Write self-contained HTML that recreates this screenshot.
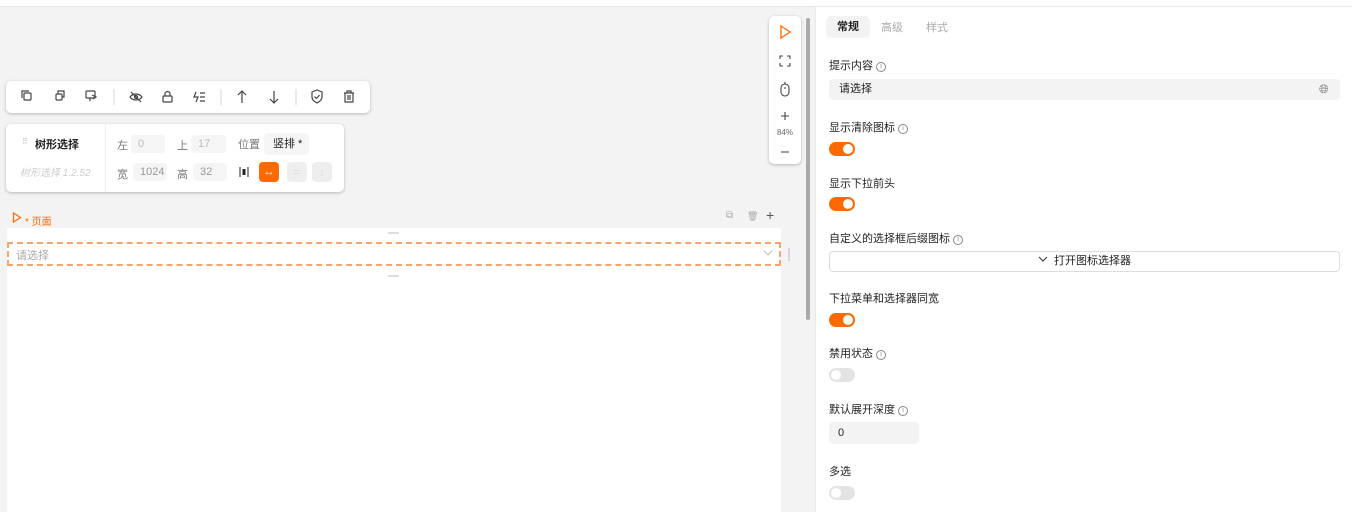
<!DOCTYPE html><html><head><meta charset="utf-8"><style>
*{box-sizing:border-box;margin:0;padding:0}
body{width:1352px;height:512px;overflow:hidden;background:#f3f3f3;font-family:"Liberation Sans","Noto Sans CJK SC",sans-serif;font-size:12px;color:#222;position:relative}
.a{position:absolute}
.card{background:#fff;border-radius:5px;box-shadow:0 1px 3px rgba(0,0,0,.25)}
.tg{position:absolute;left:829px;width:26px;height:14px;border-radius:7px;background:#ff6a00}
.tg::after{content:"";position:absolute;top:2px;right:2px;width:10px;height:10px;border-radius:50%;background:#fff}
.tg.off{background:#e3e3e3}.tg.off::after{right:auto;left:2px}
.lb{position:absolute;left:829px;font-size:11px;color:#222;line-height:14px}
.i{display:inline-block;width:10px;height:10px;border:1px solid #888;border-radius:50%;font-size:7px;line-height:8px;text-align:center;color:#888;vertical-align:1px;margin-left:3px}
.ic{position:absolute;top:91px;width:12px;height:12px}
.gi{background:#f5f5f5;border-radius:4px;color:#bbb;font-size:11px;padding-left:7px;line-height:18px;height:18px}
</style></head><body>
<div class="a" style="left:0;top:0;width:1352px;height:7px;background:#fff;border-bottom:1px solid #e8e8e8"></div>
<div class="a" style="left:815px;top:7px;width:537px;height:505px;background:#fff;border-left:1px solid #e8e8e8"></div>
<div class="a" style="left:806px;top:18px;width:4px;height:302px;background:#aaa;border-radius:2px"></div>
<!-- toolbar -->
<div class="a card" style="left:6px;top:81px;width:364px;height:32px"></div>
<svg class="a" style="left:6px;top:81px" width="364" height="32" fill="none" stroke="#444" stroke-width="1.2">
<rect x="18" y="12" width="7" height="7" rx="1"/><path d="M16 17V10h7"/>
<rect x="50" y="13" width="6" height="6" rx="1"/><path d="M52 13v-3h6v6h-2"/>
<rect x="80" y="10" width="9" height="7" rx="1"/><path d="M84 17v3M86 14l4 2-3 2"/>
<line x1="108" y1="8" x2="108" y2="24" stroke="#ddd"/>
<path d="M124 16c3-4 9-4 12 0-3 4-9 4-12 0zM125 11l10 10"/><circle cx="130" cy="16" r="1.5"/>
<rect x="157" y="15" width="9" height="6" rx="1"/><path d="M159 15v-2a2.5 2.5 0 015 0v2"/>
<path d="M190 11l-2 5h4l-2 5M194 12h5M194 16h5M194 20h5"/>
<line x1="215" y1="8" x2="215" y2="24" stroke="#ddd"/>
<path d="M236 22V10M232 14l4-4 4 4M268 10v12M264 18l4 4 4-4"/>
<line x1="290" y1="8" x2="290" y2="24" stroke="#ddd"/>
<path d="M306 11l5-2 5 2v5c0 3-3 5-5 6-2-1-5-3-5-6z"/><path d="M308.5 15.5l2 2 3-3.5"/>
<path d="M338 12h10M341 12v-2h4v2M339 12v9h8v-9M342 14v5M344 14v5"/>
</svg>
<!-- prop box -->
<div class="a card" style="left:6px;top:124px;width:338px;height:68px"></div>
<div class="a" style="left:105px;top:124px;width:1px;height:68px;background:#eee"></div>
<div class="a" style="left:22px;top:137px;font-size:8px;color:#bbb;letter-spacing:-1px">⠿</div>
<div class="a" style="left:35px;top:136px;font-size:11px;font-weight:bold">树形选择</div>
<div class="a" style="left:20px;top:164px;font-size:10px;color:#ccc;font-style:italic">树形选择 1.2.52</div>
<div class="a" style="left:117px;top:137px;font-size:11px;color:#777">左</div>
<div class="a gi" style="left:131px;top:135px;width:34px">0</div>
<div class="a" style="left:177px;top:137px;font-size:11px;color:#777">上</div>
<div class="a gi" style="left:191px;top:135px;width:35px">17</div>
<div class="a" style="left:238px;top:136px;font-size:11px;color:#777">位置</div>
<div class="a" style="left:264px;top:133px;width:45px;height:22px;background:#f5f5f5;border-radius:4px;font-size:11px;line-height:22px;padding-left:9px">竖排 *</div>
<div class="a" style="left:117px;top:166px;font-size:11px;color:#777">宽</div>
<div class="a gi" style="left:133px;top:163px;width:34px;color:#999">1024</div>
<div class="a" style="left:177px;top:166px;font-size:11px;color:#777">高</div>
<div class="a gi" style="left:193px;top:163px;width:34px;color:#999">32</div>
<svg class="a" style="left:239px;top:167px" width="10" height="10"><path d="M1 0v10M9 0v10" stroke="#222"/><rect x="3.5" y="2" width="3" height="6" fill="#222"/></svg>
<div class="a" style="left:259px;top:162px;width:20px;height:20px;background:#ff6a00;border-radius:4px;color:#fff;text-align:center;line-height:20px;font-size:11px">↔</div>
<div class="a" style="left:287px;top:162px;width:20px;height:20px;background:#eee;border-radius:4px;color:#ddd;text-align:center;line-height:20px">=</div>
<div class="a" style="left:312px;top:162px;width:20px;height:20px;background:#eee;border-radius:4px;color:#ddd;text-align:center;line-height:20px">↕</div>
<!-- page label -->
<svg class="a" style="left:12px;top:212px" width="10" height="11"><path d="M1.5 1l7 4.5-7 4.5z" fill="none" stroke="#ff6a00" stroke-width="1.2"/></svg>
<div class="a" style="left:25px;top:213px;font-size:10px;color:#ff6a00">* 页面</div>
<div class="a" style="left:726px;top:210px;font-size:10px;color:#aaa">⧉</div>
<div class="a" style="left:747px;top:211px;font-size:9px;color:#aaa">🗑</div>
<div class="a" style="left:766px;top:207px;font-size:14px;color:#555">+</div>
<div class="a" style="left:7px;top:228px;width:774px;height:284px;background:#fff"></div>
<div class="a" style="left:388px;top:232px;width:11px;height:2px;background:#ddd"></div>
<div class="a" style="left:388px;top:275px;width:11px;height:2px;background:#ddd"></div>
<div class="a" style="left:7px;top:242px;width:774px;height:24px;border:2px dashed #f5a56b"></div>
<div class="a" style="left:16px;top:247px;font-size:11px;color:#aaa">请选择</div>
<svg class="a" style="left:763px;top:250px" width="10" height="8"><path d="M1 1l4 4 4-4" fill="none" stroke="#bbb"/></svg>
<div class="a" style="left:788px;top:248px;width:2px;height:13px;background:#e0d0e0"></div>
<!-- float bar -->
<div class="a card" style="left:769px;top:16px;width:32px;height:148px"></div>
<svg class="a" style="left:769px;top:16px" width="32" height="148" fill="none" stroke="#444" stroke-width="1.1">
<path d="M12 10l9 6-9 6z" stroke="#ff6a00" stroke-width="1.3"/>
<path d="M11 43v-3h3M18 40h3v3M21 47v3h-3M14 50h-3v-3"/>
<rect x="12" y="68" width="8" height="12" rx="4"/><path d="M16 68v-2M16 71v2"/>
<path d="M16 96v8M12 100h8M12 136h8"/>
</svg>
<div class="a" style="left:769px;top:128px;width:32px;text-align:center;font-size:8px;color:#666">84%</div>
<!-- right panel -->
<div class="a" style="left:826px;top:16px;width:44px;height:22px;background:#f3f3f3;border-radius:5px;font-size:11px;font-weight:bold;text-align:center;line-height:22px">常规</div>
<div class="a" style="left:881px;top:19px;font-size:11px;color:#aaa">高级</div>
<div class="a" style="left:926px;top:19px;font-size:11px;color:#aaa">样式</div>
<div class="lb" style="top:59px">提示内容<span class="i">i</span></div>
<div class="a" style="left:829px;top:79px;width:511px;height:21px;background:#f3f3f3;border-radius:4px;font-size:11px;line-height:21px;padding-left:10px">请选择</div>
<div class="a" style="left:1319px;top:82px;font-size:12px;color:#777">🌐︎</div>
<div class="lb" style="top:121px">显示清除图标<span class="i">i</span></div>
<div class="tg" style="top:142px"></div>
<div class="lb" style="top:177px">显示下拉前头</div>
<div class="tg" style="top:197px"></div>
<div class="lb" style="top:232px">自定义的选择框后缀图标<span class="i">i</span></div>
<div class="a" style="left:829px;top:251px;width:511px;height:21px;border:1px solid #ddd;border-radius:4px;font-size:11px;line-height:19px;text-align:center"><svg width="10" height="7" style="vertical-align:1px;margin-right:6px"><path d="M1 1l4 4 4-4" fill="none" stroke="#333"/></svg>打开图标选择器</div>
<div class="lb" style="top:292px">下拉菜单和选择器同宽</div>
<div class="tg" style="top:313px"></div>
<div class="lb" style="top:347px">禁用状态<span class="i">i</span></div>
<div class="tg off" style="top:368px"></div>
<div class="lb" style="top:403px">默认展开深度<span class="i">i</span></div>
<div class="a" style="left:829px;top:422px;width:90px;height:22px;background:#f3f3f3;border-radius:4px;font-size:11px;line-height:22px;padding-left:9px">0</div>
<div class="lb" style="top:465px">多选</div>
<div class="tg off" style="top:486px"></div>
</body></html>
